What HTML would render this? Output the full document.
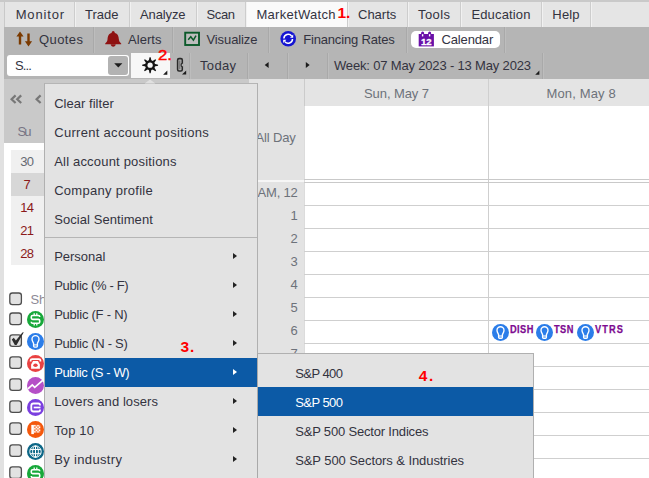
<!DOCTYPE html>
<html><head><meta charset="utf-8"><title>MarketWatch Calendar</title>
<style>
html,body{margin:0;padding:0;}
body{width:649px;height:478px;overflow:hidden;position:relative;background:#fff;font-family:"Liberation Sans",sans-serif;}
.t{position:absolute;white-space:nowrap;line-height:16px;font-family:"Liberation Sans",sans-serif;}
.r{position:absolute;}
svg{position:absolute;overflow:visible;}
</style></head><body>
<div class="r" style="left:0px;top:0px;width:649px;height:478px;background:#ffffff;"></div>
<div class="r" style="left:0px;top:0px;width:649px;height:2px;background:#c9c9c9;"></div>
<div class="r" style="left:0px;top:2px;width:649px;height:25px;background:#e5e5e5;"></div>
<div class="r" style="left:0px;top:27px;width:649px;height:52px;background:#b5b5b5;"></div>
<div class="r" style="left:0px;top:2px;width:4px;height:476px;background:#e1e1e1;"></div>
<div class="r" style="left:3.5px;top:2px;width:1.5px;height:25px;background:#c9c9c9;"></div>
<div class="r" style="left:3.6px;top:27px;width:1.4px;height:52px;background:#b5b5b5;"></div>
<div class="r" style="left:3.6px;top:79px;width:1.4px;height:64px;background:#c9c9c9;"></div>
<div class="r" style="left:246px;top:2px;width:101px;height:25px;background:#fafafa;"></div>
<div class="r" style="left:74px;top:2px;width:1px;height:25px;background:#cdcdcd;"></div>
<div class="r" style="left:75px;top:2px;width:1px;height:25px;background:#f1f1f1;"></div>
<div class="r" style="left:129px;top:2px;width:1px;height:25px;background:#cdcdcd;"></div>
<div class="r" style="left:130px;top:2px;width:1px;height:25px;background:#f1f1f1;"></div>
<div class="r" style="left:196px;top:2px;width:1px;height:25px;background:#cdcdcd;"></div>
<div class="r" style="left:197px;top:2px;width:1px;height:25px;background:#f1f1f1;"></div>
<div class="r" style="left:245px;top:2px;width:1px;height:25px;background:#cdcdcd;"></div>
<div class="r" style="left:246px;top:2px;width:1px;height:25px;background:#f1f1f1;"></div>
<div class="r" style="left:347px;top:2px;width:1px;height:25px;background:#cdcdcd;"></div>
<div class="r" style="left:348px;top:2px;width:1px;height:25px;background:#f1f1f1;"></div>
<div class="r" style="left:407px;top:2px;width:1px;height:25px;background:#cdcdcd;"></div>
<div class="r" style="left:408px;top:2px;width:1px;height:25px;background:#f1f1f1;"></div>
<div class="r" style="left:460px;top:2px;width:1px;height:25px;background:#cdcdcd;"></div>
<div class="r" style="left:461px;top:2px;width:1px;height:25px;background:#f1f1f1;"></div>
<div class="r" style="left:541px;top:2px;width:1px;height:25px;background:#cdcdcd;"></div>
<div class="r" style="left:542px;top:2px;width:1px;height:25px;background:#f1f1f1;"></div>
<div class="r" style="left:590px;top:2px;width:1px;height:25px;background:#cdcdcd;"></div>
<div class="r" style="left:591px;top:2px;width:1px;height:25px;background:#f1f1f1;"></div>
<div class="t" style="left:15.7px;top:5.8px;font-size:13px;letter-spacing:0.83px;color:#33333f;line-height:17px;">Monitor</div>
<div class="t" style="left:85.0px;top:5.8px;font-size:13px;letter-spacing:0.01px;color:#33333f;line-height:17px;">Trade</div>
<div class="t" style="left:140.0px;top:5.8px;font-size:13px;letter-spacing:-0.12px;color:#33333f;line-height:17px;">Analyze</div>
<div class="t" style="left:206.5px;top:5.8px;font-size:13px;letter-spacing:-0.38px;color:#33333f;line-height:17px;">Scan</div>
<div class="t" style="left:256.4px;top:5.8px;font-size:13px;letter-spacing:0.31px;color:#33333f;line-height:17px;">MarketWatch</div>
<div class="t" style="left:358.0px;top:5.8px;font-size:13px;letter-spacing:0.00px;color:#33333f;line-height:17px;">Charts</div>
<div class="t" style="left:418.0px;top:5.8px;font-size:13px;letter-spacing:0.41px;color:#33333f;line-height:17px;">Tools</div>
<div class="t" style="left:471.4px;top:5.8px;font-size:13px;letter-spacing:0.16px;color:#33333f;line-height:17px;">Education</div>
<div class="t" style="left:552.3px;top:5.8px;font-size:13px;letter-spacing:0.19px;color:#33333f;line-height:17px;">Help</div>
<div class="t" style="left:337.6px;top:3.0px;font-size:15.5px;letter-spacing:-0.13px;color:#ff0000;font-weight:bold;line-height:19px;">1.</div>
<div class="r" style="left:93px;top:27px;width:1px;height:26px;background:#a9a9a9;"></div>
<div class="r" style="left:94px;top:27px;width:1px;height:26px;background:#bdbdbd;"></div>
<div class="r" style="left:172px;top:27px;width:1px;height:26px;background:#a9a9a9;"></div>
<div class="r" style="left:173px;top:27px;width:1px;height:26px;background:#bdbdbd;"></div>
<div class="r" style="left:268px;top:27px;width:1px;height:26px;background:#a9a9a9;"></div>
<div class="r" style="left:269px;top:27px;width:1px;height:26px;background:#bdbdbd;"></div>
<div class="r" style="left:406px;top:27px;width:1px;height:26px;background:#a9a9a9;"></div>
<div class="r" style="left:407px;top:27px;width:1px;height:26px;background:#bdbdbd;"></div>
<div class="r" style="left:504px;top:27px;width:1px;height:26px;background:#a9a9a9;"></div>
<div class="r" style="left:505px;top:27px;width:1px;height:26px;background:#bdbdbd;"></div>
<div class="r" style="left:411px;top:31px;width:89px;height:17px;background:#ffffff;border-radius:5px;"></div>
<div class="t" style="left:39.0px;top:31.0px;font-size:13px;letter-spacing:0.42px;color:#33333f;line-height:17px;">Quotes</div>
<div class="t" style="left:128.0px;top:31.0px;font-size:13px;letter-spacing:0.05px;color:#33333f;line-height:17px;">Alerts</div>
<div class="t" style="left:206.5px;top:31.0px;font-size:13px;letter-spacing:-0.10px;color:#33333f;line-height:17px;">Visualize</div>
<div class="t" style="left:303.2px;top:31.0px;font-size:13px;letter-spacing:-0.17px;color:#33333f;line-height:17px;">Financing Rates</div>
<div class="t" style="left:441.5px;top:31.0px;font-size:13px;letter-spacing:-0.15px;color:#33333f;line-height:17px;">Calendar</div>
<div class="r" style="left:189px;top:53px;width:1px;height:26px;background:#a9a9a9;"></div>
<div class="r" style="left:190px;top:53px;width:1px;height:26px;background:#bdbdbd;"></div>
<div class="r" style="left:247px;top:53px;width:1px;height:26px;background:#a9a9a9;"></div>
<div class="r" style="left:248px;top:53px;width:1px;height:26px;background:#bdbdbd;"></div>
<div class="r" style="left:287px;top:53px;width:1px;height:26px;background:#a9a9a9;"></div>
<div class="r" style="left:288px;top:53px;width:1px;height:26px;background:#bdbdbd;"></div>
<div class="r" style="left:327px;top:53px;width:1px;height:26px;background:#a9a9a9;"></div>
<div class="r" style="left:328px;top:53px;width:1px;height:26px;background:#bdbdbd;"></div>
<div class="r" style="left:542px;top:53px;width:1px;height:26px;background:#a9a9a9;"></div>
<div class="r" style="left:543px;top:53px;width:1px;height:26px;background:#bdbdbd;"></div>
<div class="r" style="left:7px;top:55px;width:122px;height:21px;background:#ffffff;border-radius:3px;"></div>
<div class="r" style="left:108px;top:56px;width:20px;height:19px;background:#b3b3b3;border-radius:3px;"></div>
<div class="t" style="left:15.0px;top:57.0px;font-size:13px;letter-spacing:-0.84px;color:#33333f;line-height:17px;">S...</div>
<div class="r" style="left:131px;top:53px;width:39px;height:25px;background:#f7f7f7;"></div>
<div class="t" style="left:200.0px;top:57.0px;font-size:13px;letter-spacing:0.33px;color:#33333f;line-height:17px;">Today</div>
<div class="t" style="left:334.0px;top:57.0px;font-size:13px;letter-spacing:-0.17px;color:#33333f;line-height:17px;">Week: 07 May 2023 - 13 May 2023</div>
<div class="t" style="left:158.4px;top:45.0px;font-size:15.5px;letter-spacing:-0.15px;color:#ff0000;line-height:19px;-webkit-text-stroke:0.45px #ff0000;transform:scaleX(1.08);transform-origin:0 0;">2.</div>
<svg style="left:0px;top:0px" width="649" height="478" viewBox="0 0 649 478"><g fill="#7b3a00"><path d="M20 31.4 L23.6 36.6 H21.2 V44.4 H18.8 V36.6 H16.4 Z"/><path d="M28.5 46.4 L32.1 41.2 H29.7 V33.4 H27.3 V41.2 H24.9 Z"/></g></svg>
<svg style="left:0px;top:0px" width="649" height="478" viewBox="0 0 649 478"><g fill="#8f1212"><circle cx="113.2" cy="32.5" r="1.5"/><path d="M113.2 32.8 C118.4 32.8 118.7 37.4 118.9 39.6 C119.1 41.4 119.8 42.2 121.2 43.4 V44.2 H105.2 V43.4 C106.6 42.2 107.3 41.4 107.5 39.6 C107.7 37.4 108 32.8 113.2 32.8 Z"/><path d="M110.7 44.3 H115.7 C115.7 47.5 110.7 47.5 110.7 44.3 Z"/></g></svg>
<svg style="left:0px;top:0px" width="649" height="478" viewBox="0 0 649 478"><rect x="185.2" y="32.7" width="13.8" height="12.3" fill="#bdbdbd" stroke="#0b5a2a" stroke-width="1.9"/><polyline points="188.2,39.8 190.8,36.8 193.4,40.2 196,35.6" fill="none" stroke="#0b5a2a" stroke-width="1.5"/></svg>
<svg style="left:0px;top:0px" width="649" height="478" viewBox="0 0 649 478"><circle cx="288.2" cy="38.8" r="7.8" fill="#1414d2"/><g fill="none" stroke="#fff" stroke-width="1.5"><path d="M283.9 38.6 A4.3 4.3 0 0 1 291.6 36.0"/><path d="M292.5 39.0 A4.3 4.3 0 0 1 284.8 41.6"/></g><path d="M293.2 34.6 V37.8 H290.0 Z" fill="#fff"/><path d="M283.2 43.0 V39.8 H286.4 Z" fill="#fff"/></svg>
<svg style="left:0px;top:0px" width="649" height="478" viewBox="0 0 649 478"><g fill="#6a10a8"><rect x="418.7" y="34" width="15.2" height="12.4"/><rect x="421.1" y="31.4" width="3" height="4.8" rx="1.5"/><rect x="428.1" y="31.4" width="3" height="4.8" rx="1.5"/></g><rect x="421.9" y="34.2" width="1.4" height="2.2" fill="#fff"/><rect x="428.9" y="34.2" width="1.4" height="2.2" fill="#fff"/><text x="426.3" y="44.6" font-family="Liberation Sans" font-weight="bold" font-size="9.6" fill="#fff" text-anchor="middle" stroke="#fff" stroke-width="0.3">12</text></svg>
<svg style="left:0px;top:0px" width="649" height="478" viewBox="0 0 649 478"><path d="M114.2 63.2 H122.4 L118.3 67.4 Z" fill="#1c1c1c"/></svg>
<svg style="left:0px;top:0px" width="649" height="478" viewBox="0 0 649 478"><path d="M154.49 63.84 L158.08 64.64 L158.08 65.76 L154.49 66.56 L154.17 67.35 L156.14 70.45 L155.35 71.24 L152.25 69.27 L151.46 69.59 L150.66 73.18 L149.54 73.18 L148.74 69.59 L147.95 69.27 L144.85 71.24 L144.06 70.45 L146.03 67.35 L145.71 66.56 L142.12 65.76 L142.12 64.64 L145.71 63.84 L146.03 63.05 L144.06 59.95 L144.85 59.16 L147.95 61.13 L148.74 60.81 L149.54 57.22 L150.66 57.22 L151.46 60.81 L152.25 61.13 L155.35 59.16 L156.14 59.95 L154.17 63.05 Z" fill="#151515"/><circle cx="150.1" cy="65.2" r="4.8999999999999995" fill="#151515"/><circle cx="150.1" cy="65.2" r="2.6" fill="#f6f6f6"/></svg>
<svg style="left:0px;top:0px" width="649" height="478" viewBox="0 0 649 478"><path d="M167.3 70.5 V74.7 H163.10000000000002 Z" fill="#1c1c1c"/></svg>
<svg style="left:0px;top:0px" width="649" height="478" viewBox="0 0 649 478"><path d="M186.2 70.39999999999999 V74.6 H182.0 Z" fill="#1c1c1c"/></svg>
<svg style="left:0px;top:0px" width="649" height="478" viewBox="0 0 649 478"><path d="M539.4 70.5 V74.7 H535.1999999999999 Z" fill="#1c1c1c"/></svg>
<svg style="left:0px;top:0px" width="649" height="478" viewBox="0 0 649 478"><rect x="177.6" y="58.6" width="4.7" height="12.3" rx="1.4" fill="none" stroke="#2a2a2a" stroke-width="1.55"/><rect x="181.2" y="63.7" width="2.2" height="2.6" fill="#b5b5b5"/><path d="M182.3 63.3 Q181 63.6 181 65 Q181 66.4 182.3 66.7" fill="none" stroke="#2a2a2a" stroke-width="1.2"/><path d="M179.8 60.4 V69.2" stroke="#6c6c6c" stroke-width="1.1"/></svg>
<svg style="left:0px;top:0px" width="649" height="478" viewBox="0 0 649 478"><path d="M268.6 61.9 V67.9 L264.7 64.9 Z" fill="#1c1c1c"/><path d="M305.8 61.9 V67.9 L309.7 64.9 Z" fill="#1c1c1c"/></svg>
<div class="r" style="left:5px;top:79px;width:244px;height:64px;background:#c9c9c9;"></div>
<div class="r" style="left:249px;top:79px;width:9px;height:5px;background:#e3e3e3;"></div>
<div class="r" style="left:11px;top:150px;width:34px;height:115px;background:#f0f0f0;"></div>
<div class="r" style="left:11px;top:173px;width:34px;height:23px;background:#d7d7d7;"></div>
<div class="t" style="left:17.6px;top:123.0px;font-size:13px;letter-spacing:-2.10px;color:#777484;line-height:17px;">Su</div>
<div class="t" style="left:20.3px;top:153.0px;font-size:13px;letter-spacing:-0.80px;color:#666a72;line-height:17px;">30</div>
<div class="t" style="left:23.5px;top:176.0px;font-size:13px;letter-spacing:0.00px;color:#8b1a1a;line-height:17px;">7</div>
<div class="t" style="left:20.3px;top:199.0px;font-size:13px;letter-spacing:-0.80px;color:#8b1a1a;line-height:17px;">14</div>
<div class="t" style="left:20.3px;top:222.0px;font-size:13px;letter-spacing:-0.80px;color:#8b1a1a;line-height:17px;">21</div>
<div class="t" style="left:20.3px;top:245.0px;font-size:13px;letter-spacing:-0.80px;color:#8b1a1a;line-height:17px;">28</div>
<svg style="left:0px;top:0px" width="649" height="478" viewBox="0 0 649 478"><g fill="none" stroke="#777" stroke-width="2.2"><polyline points="15.6,95.4 11.6,99.2 15.6,103"/><polyline points="21.2,95.4 17.2,99.2 21.2,103"/><polyline points="40.6,95.4 36.6,99.2 40.6,103"/></g></svg>
<svg style="left:0px;top:0px" width="649" height="478" viewBox="0 0 649 478"><rect x="9.8" y="293.0" width="11.6" height="11.6" rx="2.6" fill="#e2e2e2" stroke="#4e4e4e" stroke-width="1.3"/></svg>
<svg style="left:0px;top:0px" width="649" height="478" viewBox="0 0 649 478"><rect x="9.8" y="313.0" width="11.6" height="11.6" rx="2.6" fill="#e2e2e2" stroke="#4e4e4e" stroke-width="1.3"/></svg>
<svg style="left:0px;top:0px" width="649" height="478" viewBox="0 0 649 478"><rect x="9.8" y="334.8" width="11.6" height="11.6" rx="2.6" fill="#e2e2e2" stroke="#4e4e4e" stroke-width="1.3"/></svg>
<svg style="left:0px;top:0px" width="649" height="478" viewBox="0 0 649 478"><rect x="9.8" y="356.8" width="11.6" height="11.6" rx="2.6" fill="#e2e2e2" stroke="#4e4e4e" stroke-width="1.3"/></svg>
<svg style="left:0px;top:0px" width="649" height="478" viewBox="0 0 649 478"><rect x="9.8" y="378.8" width="11.6" height="11.6" rx="2.6" fill="#e2e2e2" stroke="#4e4e4e" stroke-width="1.3"/></svg>
<svg style="left:0px;top:0px" width="649" height="478" viewBox="0 0 649 478"><rect x="9.8" y="400.8" width="11.6" height="11.6" rx="2.6" fill="#e2e2e2" stroke="#4e4e4e" stroke-width="1.3"/></svg>
<svg style="left:0px;top:0px" width="649" height="478" viewBox="0 0 649 478"><rect x="9.8" y="422.8" width="11.6" height="11.6" rx="2.6" fill="#e2e2e2" stroke="#4e4e4e" stroke-width="1.3"/></svg>
<svg style="left:0px;top:0px" width="649" height="478" viewBox="0 0 649 478"><rect x="9.8" y="444.8" width="11.6" height="11.6" rx="2.6" fill="#e2e2e2" stroke="#4e4e4e" stroke-width="1.3"/></svg>
<svg style="left:0px;top:0px" width="649" height="478" viewBox="0 0 649 478"><rect x="9.8" y="466.8" width="11.6" height="11.6" rx="2.6" fill="#e2e2e2" stroke="#4e4e4e" stroke-width="1.3"/></svg>
<svg style="left:0px;top:0px" width="649" height="478" viewBox="0 0 649 478"><path d="M11.8 339.6 L13.8 337.8 L15.9 340.6 L22.4 332.6 L23.8 332.2 L16.6 345 L14.8 345 Z" fill="#2e2e2e"/></svg>
<div class="t" style="left:30.4px;top:291.0px;font-size:13px;letter-spacing:0.00px;color:#8d8a96;line-height:17px;width:14.2px;overflow:hidden;">Show</div>
<svg style="left:0px;top:0px" width="649" height="478" viewBox="0 0 649 478"><circle cx="35.5" cy="319.4" r="8.5" fill="#17a83a"/><g fill="none" stroke="#fff" stroke-width="1.6" stroke-linejoin="round"><path d="M39.7 317.0 V316.8 Q39.7 315.5 38.400000000000006 315.5 H32.6 Q31.3 315.5 31.3 316.8 V318.09999999999997 Q31.3 319.4 32.6 319.4 H38.400000000000006 Q39.7 319.4 39.7 320.7 V321.99999999999994 Q39.7 323.29999999999995 38.400000000000006 323.29999999999995 H32.6 Q31.3 323.29999999999995 31.3 321.99999999999994 V321.79999999999995"/><path d="M34.2 313.2 V315.5 M36.8 313.2 V315.5 M34.2 325.59999999999997 V323.29999999999995 M36.8 325.59999999999997 V323.29999999999995" stroke-width="1.3"/></g></svg>
<svg style="left:0px;top:0px" width="649" height="478" viewBox="0 0 649 478"><circle cx="35.5" cy="341.4" r="8.5" fill="#2b7de9"/><g fill="none" stroke="#fff" stroke-width="1.35" stroke-linejoin="round"><path d="M33.6 343.79999999999995 C33.6 342.4 32.0 341.7 32.0 339.09999999999997 A3.5 3.5 0 0 1 39.0 339.09999999999997 C39.0 341.7 37.4 342.4 37.4 343.79999999999995 V346.09999999999997 Q37.4 347.09999999999997 36.4 347.09999999999997 H34.6 Q33.6 347.09999999999997 33.6 346.09999999999997 Z"/><path d="M33.6 344.9 H37.4" stroke-width="1.1"/></g></svg>
<svg style="left:0px;top:0px" width="649" height="478" viewBox="0 0 649 478"><circle cx="35.5" cy="363.5" r="8.5" fill="#e94242"/><path d="M30.6 361.6 V360.5 Q30.6 359.1 32.1 359.1 H38.9 Q40.4 359.1 40.4 360.5 V361.6" fill="none" stroke="#fff" stroke-width="1.7"/><path d="M33.1 361.1 H37.9 L39.9 364.5 V368.7 H31.1 V364.5 Z" fill="#fff"/><ellipse cx="35.5" cy="365.3" rx="2.2" ry="1.8" fill="#e94242"/></svg>
<svg style="left:0px;top:0px" width="649" height="478" viewBox="0 0 649 478"><circle cx="35.5" cy="385.5" r="8.5" fill="#b54fc7"/><polyline points="27.9,388.9 32.3,384.9 34.7,387.3 42.7,380.3" fill="none" stroke="#fff" stroke-width="1.7"/></svg>
<svg style="left:0px;top:0px" width="649" height="478" viewBox="0 0 649 478"><circle cx="35.5" cy="407.5" r="8.5" fill="#7a3fdf"/><g fill="none" stroke="#fff" stroke-width="1.8"><path d="M40.0 405.5 V405.1 Q40.0 403.5 38.3 403.5 H33.5 Q31.3 403.5 31.3 405.7 V409.3 Q31.3 411.5 33.5 411.5 H38.3 Q40.0 411.5 40.0 409.9 V409.5"/><path d="M33.7 407.5 H40.5" stroke-width="1.7"/></g></svg>
<svg style="left:0px;top:0px" width="649" height="478" viewBox="0 0 649 478"><circle cx="35.5" cy="429.5" r="8.5" fill="#f4580c"/><rect x="31.3" y="424.9" width="2.6" height="9.2" fill="#fff"/><rect x="34.10" y="424.90" width="1.55" height="1.55" fill="#fff"/><rect x="35.65" y="424.90" width="1.55" height="1.55" fill="#fff" opacity="0.35"/><rect x="37.20" y="424.90" width="1.55" height="1.55" fill="#fff"/><rect x="38.75" y="424.90" width="1.55" height="1.55" fill="#fff" opacity="0.35"/><rect x="34.10" y="426.45" width="1.55" height="1.55" fill="#fff" opacity="0.35"/><rect x="35.65" y="426.45" width="1.55" height="1.55" fill="#fff"/><rect x="37.20" y="426.45" width="1.55" height="1.55" fill="#fff" opacity="0.35"/><rect x="38.75" y="426.45" width="1.55" height="1.55" fill="#fff"/><rect x="34.10" y="428.00" width="1.55" height="1.55" fill="#fff"/><rect x="35.65" y="428.00" width="1.55" height="1.55" fill="#fff" opacity="0.35"/><rect x="37.20" y="428.00" width="1.55" height="1.55" fill="#fff"/><rect x="38.75" y="428.00" width="1.55" height="1.55" fill="#fff" opacity="0.35"/><rect x="34.10" y="429.55" width="1.55" height="1.55" fill="#fff" opacity="0.35"/><rect x="35.65" y="429.55" width="1.55" height="1.55" fill="#fff"/><rect x="37.20" y="429.55" width="1.55" height="1.55" fill="#fff" opacity="0.35"/><rect x="38.75" y="429.55" width="1.55" height="1.55" fill="#fff"/><rect x="34.10" y="431.10" width="1.55" height="1.55" fill="#fff"/><rect x="35.65" y="431.10" width="1.55" height="1.55" fill="#fff" opacity="0.35"/><rect x="37.20" y="431.10" width="1.55" height="1.55" fill="#fff"/><rect x="38.75" y="431.10" width="1.55" height="1.55" fill="#fff" opacity="0.35"/></svg>
<svg style="left:0px;top:0px" width="649" height="478" viewBox="0 0 649 478"><circle cx="35.5" cy="451.6" r="8.5" fill="#0d6787"/><g fill="none" stroke="#fff" stroke-width="1"><circle cx="35.5" cy="451.6" r="5.7"/><ellipse cx="35.5" cy="451.6" rx="2.9" ry="5.7"/><path d="M35.5 445.90000000000003 V457.3 M30.2 449.5 H40.8 M30.2 453.70000000000005 H40.8"/></g></svg>
<svg style="left:0px;top:0px" width="649" height="478" viewBox="0 0 649 478"><circle cx="35.5" cy="473.6" r="8.5" fill="#17a83a"/><g fill="none" stroke="#fff" stroke-width="1.6" stroke-linejoin="round"><path d="M39.7 471.20000000000005 V471.00000000000006 Q39.7 469.70000000000005 38.400000000000006 469.70000000000005 H32.6 Q31.3 469.70000000000005 31.3 471.00000000000006 V472.3 Q31.3 473.6 32.6 473.6 H38.400000000000006 Q39.7 473.6 39.7 474.90000000000003 V476.2 Q39.7 477.5 38.400000000000006 477.5 H32.6 Q31.3 477.5 31.3 476.2 V476.0"/><path d="M34.2 467.40000000000003 V469.70000000000005 M36.8 467.40000000000003 V469.70000000000005 M34.2 479.8 V477.5 M36.8 479.8 V477.5" stroke-width="1.3"/></g></svg>
<div class="r" style="left:258px;top:79px;width:46px;height:400px;background:#e3e3e3;"></div>
<div class="r" style="left:304px;top:79px;width:345px;height:27.4px;background:#e4e4e4;"></div>
<div class="r" style="left:488px;top:79px;width:1px;height:400px;background:#cfcfcf;"></div>
<div class="r" style="left:304px;top:79px;width:1px;height:27px;background:#cbcbcb;"></div>
<div class="r" style="left:304px;top:106px;width:1px;height:372px;background:#dcdcdc;"></div>
<div class="t" style="left:364.0px;top:85.3px;font-size:13px;letter-spacing:-0.08px;color:#6d727a;line-height:17px;">Sun, May 7</div>
<div class="t" style="left:546.5px;top:85.3px;font-size:13px;letter-spacing:0.14px;color:#6d727a;line-height:17px;">Mon, May 8</div>
<div class="t" style="left:255.6px;top:129.0px;font-size:13px;letter-spacing:-0.16px;color:#6d727a;line-height:17px;">All Day</div>
<div class="r" style="left:304px;top:178.6px;width:345px;height:1px;background:#c9c9c9;"></div>
<div class="r" style="left:258px;top:179.6px;width:46px;height:2.2px;background:#f6f6f6;"></div>
<div class="r" style="left:304px;top:181.8px;width:345px;height:1px;background:#c9c9c9;"></div>
<div class="r" style="left:304px;top:205px;width:345px;height:1px;background:#cfcfcf;"></div>
<div class="r" style="left:304px;top:228px;width:345px;height:1px;background:#cfcfcf;"></div>
<div class="r" style="left:304px;top:251px;width:345px;height:1px;background:#cfcfcf;"></div>
<div class="r" style="left:304px;top:274px;width:345px;height:1px;background:#cfcfcf;"></div>
<div class="r" style="left:304px;top:297px;width:345px;height:1px;background:#cfcfcf;"></div>
<div class="r" style="left:304px;top:320px;width:345px;height:1px;background:#cfcfcf;"></div>
<div class="r" style="left:304px;top:343px;width:345px;height:1px;background:#cfcfcf;"></div>
<div class="r" style="left:304px;top:366px;width:345px;height:1px;background:#cfcfcf;"></div>
<div class="r" style="left:304px;top:389px;width:345px;height:1px;background:#cfcfcf;"></div>
<div class="r" style="left:304px;top:412px;width:345px;height:1px;background:#cfcfcf;"></div>
<div class="r" style="left:304px;top:435px;width:345px;height:1px;background:#cfcfcf;"></div>
<div class="r" style="left:304px;top:458px;width:345px;height:1px;background:#cfcfcf;"></div>
<div class="t" style="left:257.6px;top:184.0px;font-size:13px;letter-spacing:-0.20px;color:#6d727a;line-height:17px;">AM, 12</div>
<div class="t" style="left:290.6px;top:207.0px;font-size:13px;letter-spacing:0.00px;color:#6d727a;line-height:17px;">1</div>
<div class="t" style="left:290.6px;top:230.0px;font-size:13px;letter-spacing:0.00px;color:#6d727a;line-height:17px;">2</div>
<div class="t" style="left:290.6px;top:253.0px;font-size:13px;letter-spacing:0.00px;color:#6d727a;line-height:17px;">3</div>
<div class="t" style="left:290.6px;top:276.0px;font-size:13px;letter-spacing:0.00px;color:#6d727a;line-height:17px;">4</div>
<div class="t" style="left:290.6px;top:299.0px;font-size:13px;letter-spacing:0.00px;color:#6d727a;line-height:17px;">5</div>
<div class="t" style="left:290.6px;top:322.0px;font-size:13px;letter-spacing:0.00px;color:#6d727a;line-height:17px;">6</div>
<div class="t" style="left:290.6px;top:345.0px;font-size:13px;letter-spacing:0.00px;color:#6d727a;line-height:17px;">7</div>
<svg style="left:0px;top:0px" width="649" height="478" viewBox="0 0 649 478"><circle cx="500.5" cy="332.5" r="8.5" fill="#2b7de9"/><g fill="none" stroke="#fff" stroke-width="1.35" stroke-linejoin="round"><path d="M498.6 334.9 C498.6 333.5 497.0 332.8 497.0 330.2 A3.5 3.5 0 0 1 504.0 330.2 C504.0 332.8 502.4 333.5 502.4 334.9 V337.2 Q502.4 338.2 501.4 338.2 H499.6 Q498.6 338.2 498.6 337.2 Z"/><path d="M498.6 336.0 H502.4" stroke-width="1.1"/></g></svg>
<div class="t" style="left:509.7px;top:322.0px;font-size:11px;letter-spacing:0.49px;color:#7d0a90;font-weight:bold;line-height:14px;-webkit-text-stroke:0.25px #7d0a90;transform:scaleX(0.84);transform-origin:0 0;">DISH</div>
<svg style="left:0px;top:0px" width="649" height="478" viewBox="0 0 649 478"><circle cx="544.5" cy="332.5" r="8.5" fill="#2b7de9"/><g fill="none" stroke="#fff" stroke-width="1.35" stroke-linejoin="round"><path d="M542.6 334.9 C542.6 333.5 541.0 332.8 541.0 330.2 A3.5 3.5 0 0 1 548.0 330.2 C548.0 332.8 546.4 333.5 546.4 334.9 V337.2 Q546.4 338.2 545.4 338.2 H543.6 Q542.6 338.2 542.6 337.2 Z"/><path d="M542.6 336.0 H546.4" stroke-width="1.1"/></g></svg>
<div class="t" style="left:554.0px;top:322.0px;font-size:11px;letter-spacing:0.55px;color:#7d0a90;font-weight:bold;line-height:14px;-webkit-text-stroke:0.25px #7d0a90;transform:scaleX(0.84);transform-origin:0 0;">TSN</div>
<svg style="left:0px;top:0px" width="649" height="478" viewBox="0 0 649 478"><circle cx="585.5" cy="332.5" r="8.5" fill="#2b7de9"/><g fill="none" stroke="#fff" stroke-width="1.35" stroke-linejoin="round"><path d="M583.6 334.9 C583.6 333.5 582.0 332.8 582.0 330.2 A3.5 3.5 0 0 1 589.0 330.2 C589.0 332.8 587.4 333.5 587.4 334.9 V337.2 Q587.4 338.2 586.4 338.2 H584.6 Q583.6 338.2 583.6 337.2 Z"/><path d="M583.6 336.0 H587.4" stroke-width="1.1"/></g></svg>
<div class="t" style="left:594.7px;top:322.0px;font-size:11px;letter-spacing:1.29px;color:#7d0a90;font-weight:bold;line-height:14px;-webkit-text-stroke:0.25px #7d0a90;transform:scaleX(0.84);transform-origin:0 0;">VTRS</div>
<div class="r" style="left:44px;top:83px;width:214px;height:396px;background:#e3e3e3;border-left:1px solid #b0b0b0;border-top:1px solid #b5b5b5;border-right:1px solid #b0b0b0;box-sizing:border-box;"></div>
<div class="r" style="left:45px;top:237px;width:212px;height:1px;background:#b5b5b5;"></div>
<div class="r" style="left:45px;top:358px;width:212px;height:29px;background:#0c5aa6;"></div>
<div class="t" style="left:54.2px;top:95.0px;font-size:13px;letter-spacing:0.03px;color:#33333f;line-height:17px;">Clear filter</div>
<div class="t" style="left:54.2px;top:124.0px;font-size:13px;letter-spacing:0.30px;color:#33333f;line-height:17px;">Current account positions</div>
<div class="t" style="left:54.2px;top:153.0px;font-size:13px;letter-spacing:0.19px;color:#33333f;line-height:17px;">All account positions</div>
<div class="t" style="left:54.2px;top:182.0px;font-size:13px;letter-spacing:0.28px;color:#33333f;line-height:17px;">Company profile</div>
<div class="t" style="left:54.2px;top:211.0px;font-size:13px;letter-spacing:0.07px;color:#33333f;line-height:17px;">Social Sentiment</div>
<div class="t" style="left:54.2px;top:248.0px;font-size:13px;letter-spacing:-0.03px;color:#33333f;line-height:17px;">Personal</div>
<div class="t" style="left:54.2px;top:277.0px;font-size:13px;letter-spacing:-0.33px;color:#33333f;line-height:17px;">Public (% - F)</div>
<div class="t" style="left:54.2px;top:306.0px;font-size:13px;letter-spacing:-0.24px;color:#33333f;line-height:17px;">Public (F - N)</div>
<div class="t" style="left:54.2px;top:335.0px;font-size:13px;letter-spacing:-0.29px;color:#33333f;line-height:17px;">Public (N - S)</div>
<div class="t" style="left:54.2px;top:364.0px;font-size:13px;letter-spacing:-0.36px;color:#fff;line-height:17px;">Public (S - W)</div>
<div class="t" style="left:54.2px;top:393.0px;font-size:13px;letter-spacing:0.07px;color:#33333f;line-height:17px;">Lovers and losers</div>
<div class="t" style="left:54.2px;top:422.0px;font-size:13px;letter-spacing:0.15px;color:#33333f;line-height:17px;">Top 10</div>
<div class="t" style="left:54.2px;top:451.0px;font-size:13px;letter-spacing:0.35px;color:#33333f;line-height:17px;">By industry</div>
<div style="position:absolute;left:232.6px;top:252.5px;width:0;height:0;border-left:4.2px solid #222;border-top:3.5px solid transparent;border-bottom:3.5px solid transparent"></div>
<div style="position:absolute;left:232.6px;top:281.5px;width:0;height:0;border-left:4.2px solid #222;border-top:3.5px solid transparent;border-bottom:3.5px solid transparent"></div>
<div style="position:absolute;left:232.6px;top:310.5px;width:0;height:0;border-left:4.2px solid #222;border-top:3.5px solid transparent;border-bottom:3.5px solid transparent"></div>
<div style="position:absolute;left:232.6px;top:339.5px;width:0;height:0;border-left:4.2px solid #222;border-top:3.5px solid transparent;border-bottom:3.5px solid transparent"></div>
<div style="position:absolute;left:232.6px;top:368.5px;width:0;height:0;border-left:4.2px solid #fff;border-top:3.5px solid transparent;border-bottom:3.5px solid transparent"></div>
<div style="position:absolute;left:232.6px;top:397.5px;width:0;height:0;border-left:4.2px solid #222;border-top:3.5px solid transparent;border-bottom:3.5px solid transparent"></div>
<div style="position:absolute;left:232.6px;top:426.5px;width:0;height:0;border-left:4.2px solid #222;border-top:3.5px solid transparent;border-bottom:3.5px solid transparent"></div>
<div style="position:absolute;left:232.6px;top:455.5px;width:0;height:0;border-left:4.2px solid #222;border-top:3.5px solid transparent;border-bottom:3.5px solid transparent"></div>
<div class="t" style="left:180.6px;top:337.0px;font-size:15.5px;letter-spacing:0.67px;color:#ff0000;font-weight:bold;line-height:19px;">3.</div>
<svg style="left:0px;top:0px" width="649" height="478" viewBox="0 0 649 478"><path d="M150 79.6 L155.4 83.6 H144.6 Z" fill="#e0e0e0"/></svg>
<div class="r" style="left:257px;top:353px;width:277px;height:126px;background:#e3e3e3;border-left:1px solid #a9a9a9;border-top:1px solid #b0b0b0;border-right:1px solid #b0b0b0;box-sizing:border-box;"></div>
<div class="r" style="left:258px;top:387px;width:275px;height:29px;background:#0c5aa6;"></div>
<div class="t" style="left:295.2px;top:365.0px;font-size:13px;letter-spacing:-0.55px;color:#33333f;line-height:17px;">S&amp;P 400</div>
<div class="t" style="left:295.2px;top:394.0px;font-size:13px;letter-spacing:-0.55px;color:#fff;line-height:17px;">S&amp;P 500</div>
<div class="t" style="left:295.2px;top:423.0px;font-size:13px;letter-spacing:-0.18px;color:#33333f;line-height:17px;">S&amp;P 500 Sector Indices</div>
<div class="t" style="left:295.2px;top:452.0px;font-size:13px;letter-spacing:-0.08px;color:#33333f;line-height:17px;">S&amp;P 500 Sectors &amp; Industries</div>
<div class="t" style="left:418.8px;top:366.0px;font-size:15.5px;letter-spacing:1.47px;color:#ff0000;font-weight:bold;line-height:19px;">4.</div>
</body></html>
